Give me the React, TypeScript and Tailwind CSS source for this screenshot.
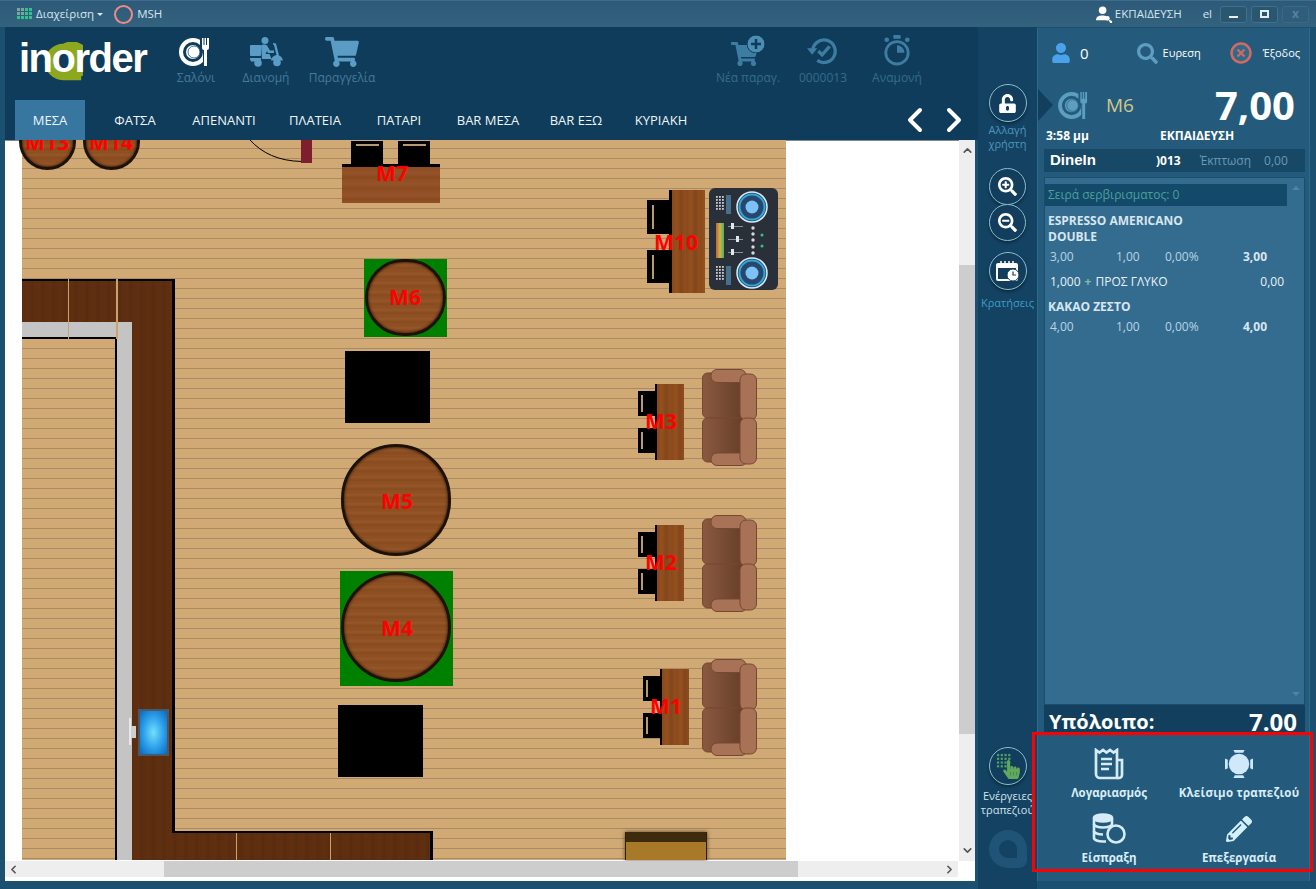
import { ChevronDown, ChevronLeft, ChevronRight, ChevronUp } from "lucide-react";
import type { ReactNode } from "react";
import {
    FaHandPointer,
    FaPencilAlt,
    FaSearch,
    FaSearchMinus,
    FaSearchPlus,
    FaShoppingCart,
    FaUnlockAlt,
    FaUser,
} from "react-icons/fa";

const woodRound =
    "bg-[repeating-linear-gradient(180deg,#8c4e1f_0px,#95562a_3px,#884b1e_6px,#905224_9px)]";
const woodVertical =
    "bg-[repeating-linear-gradient(90deg,#8a481c_0px,#94511f_5px,#84451b_9px,#90501f_14px)]";
const woodHorizontal =
    "bg-[repeating-linear-gradient(180deg,#8d4c20_0px,#95532a_6px,#894a20_11px)]";
const woodDark =
    "bg-[repeating-linear-gradient(90deg,#5c2d0f_0px,#5f2f10_6px,#582b0f_11px)]";

const PlateIcon = (props: { className: string; gap: string }) => (
    <svg viewBox="0 0 34 30" className={props.className} fill="none">
        <circle cx="14" cy="15" r="12" stroke="currentColor" strokeWidth="4" />
        <circle cx="14" cy="15" r="7" fill="currentColor" />
        <circle cx="15" cy="15" r="6" fill="none" stroke={props.gap} strokeWidth="1" opacity="0.7" />
        <path d="M21 1h12v10a3 3 0 0 1-3 3v16h-6V14a3 3 0 0 1-3-3z" fill={props.gap} />
        <path
            d="M23 1h1.500v7h1V1h1.500v7h1V1H30v10a2 2 0 0 1-2 2v16h-3V13a2 2 0 0 1-2-2z"
            fill="currentColor"
        />
    </svg>
);

const RiderIcon = () => (
    <svg viewBox="0 0 33 30" className="w-[33px] h-[30px] text-[#5b9cc4]" fill="currentColor">
        <rect x="0" y="8" width="11" height="11" rx="1" />
        <circle cx="15" cy="3.500" r="3.500" />
        <path d="M11 8.500c1-1.500 5-1.500 6 0l3 5h4v2.500h-6l-1-2-1.500 3h4l2 5H12z" />
        <path d="M23 6l3 .5 3 12c2 .8 3.500 2.500 4 5H21c0-2.500 3-5 5.500-5.500L24 8l-1-.5z" />
        <path d="M0 21h11v1.500c0 1-.5 1.500-1 2H1c-.6-1-1-2-1-3.500z" />
        <circle cx="8" cy="26" r="3.800" />
        <circle cx="27" cy="25.500" r="3.800" />
    </svg>
);

const HistoryIcon = () => (
    <svg viewBox="0 0 34 34" className="w-[32px] h-[32px] text-[#3d7da2]" fill="none">
        <path d="M6 17A12 12 0 1 1 11 27" stroke="currentColor" strokeWidth="3.500" />
        <path d="M0 14h11l-5.500 7z" fill="currentColor" />
        <path d="M12 17l4 4 8-9" stroke="currentColor" strokeWidth="3.500" />
    </svg>
);

const TimerIcon = () => (
    <svg viewBox="0 0 30 36" className="w-[28px] h-[34px] text-[#3d7da2]" fill="none">
        <circle cx="15" cy="21" r="12" stroke="currentColor" strokeWidth="3" />
        <path d="M15 21v-8a8 8 0 0 1 8 8z" fill="currentColor" />
        <rect x="11" y="2" width="8" height="4" rx="1" fill="currentColor" />
        <circle cx="4" cy="7" r="2.500" fill="currentColor" />
        <circle cx="26" cy="7" r="2.500" fill="currentColor" />
    </svg>
);

const CartPlusIcon = () => (
    <div className="relative w-[34px] h-[32px] text-[#3d7da2]">
        <FaShoppingCart className="absolute left-0 bottom-0 w-[27px] h-[26px]" />
        <svg viewBox="0 0 18 18" className="absolute right-0 top-0 w-[18px] h-[18px]">
            <circle cx="9" cy="9" r="9" fill="#4c8db3" stroke="#0f3c5a" strokeWidth="1" />
            <path d="M9 4v10M4 9h10" stroke="#0f3c5a" strokeWidth="2.500" />
        </svg>
    </div>
);

const CalendarIcon = () => (
    <svg viewBox="0 0 24 22" className="w-[24px] h-[22px]">
        <rect x="0" y="3" width="22" height="18" rx="2" fill="#fff" />
        <rect x="2" y="8" width="18" height="11" fill="#123d5c" />
        <path d="M5 1v4M9 1v4M13 1v4M17 1v4" stroke="#fff" strokeWidth="1.500" />
        <circle cx="17" cy="15" r="6" fill="#fff" stroke="#123d5c" strokeWidth="1" />
        <path d="M17 11.500V15h3" stroke="#123d5c" strokeWidth="1.200" fill="none" />
    </svg>
);

const TouchIcon = () => (
    <div className="relative w-[24px] h-[26px]">
        <svg viewBox="0 0 16 16" className="absolute left-0 top-0 w-[15px] h-[15px]">
            {[1, 5, 9, 13].map((y) =>
                [1, 5, 9, 13].map((x) => (
                    <rect key={`${x}-${y}`} x={x} y={y} width="2.400" height="2.400" fill="#4f9d63" />
                )),
            )}
        </svg>
        <FaHandPointer className="absolute right-0 bottom-0 w-[17px] h-[19px] text-[#5fa85c]" />
    </div>
);

const ReceiptIcon = () => (
    <svg viewBox="0 0 32 32" className="w-[32px] h-[32px]" fill="none" stroke="#d3ecf7" strokeWidth="2.700">
        <path d="M3 2l3.500 2.500L10 2l3.500 2.500L17 2l3.500 2.500L24 2v28H7a4 4 0 0 1-4-4z" />
        <path d="M8 11h11M8 16h11M8 21h8" />
        <path d="M24 12h5v15a3 3 0 0 1-3 3h-2" />
    </svg>
);

const TableIcon = () => (
    <svg viewBox="0 0 30 30" className="w-[28px] h-[28px]" fill="#cfe8fa">
        <circle cx="15" cy="15" r="11" />
        <path d="M9 0h12l-1.500 3h-9z" />
        <path d="M9 30h12l-1.500-3h-9z" />
        <path d="M0 9v12l3-1.500v-9z" />
        <path d="M30 9v12l-3-1.500v-9z" />
    </svg>
);

const CoinsIcon = () => (
    <svg viewBox="0 0 34 32" className="w-[34px] h-[32px]" fill="none" stroke="#d3ecf7" strokeWidth="2.600">
        <ellipse cx="11" cy="5" rx="9" ry="3.500" fill="#d3ecf7" />
        <path d="M2 5v6c0 2 4 3.500 9 3.500s9-1.500 9-3.500V5" />
        <path d="M2 11v7c0 2 4 3.500 9 3.500" />
        <path d="M2 18v7c0 2 4 3.500 9 3.500h3" />
        <circle cx="24" cy="21" r="8.500" />
    </svg>
);

const MainNavItem = (props: { width: string; icon: ReactNode; label: string; labelColor: string }) => (
    <div className={`flex flex-col items-center gap-[3px] ${props.width}`}>
        <div className="h-[32px] flex items-end justify-center">{props.icon}</div>
        <span className={`text-[12px] leading-[16px] whitespace-nowrap ${props.labelColor}`}>
            {props.label}
        </span>
    </div>
);

const TitleBar = () => (
    <div className="h-[27px] shrink-0 flex items-center pl-[17px] pr-[7px] text-[11.5px] text-[#d7e6ef] bg-[linear-gradient(180deg,#2c5a78,#33627f)] border-t border-[#3d6f8d]">
        <svg viewBox="0 0 15 12" className="w-[15px] h-[12px]">
            {[0, 4, 8].map((y) =>
                [0, 4, 8, 12].map((x) => (
                    <rect
                        key={`${x}-${y}`}
                        x={x}
                        y={y}
                        width="3"
                        height="3"
                        fill={x > 4 || y > 4 ? "#35c08e" : "#7aa79c"}
                    />
                )),
            )}
        </svg>
        <span className="ml-[4px]">Διαχείριση</span>
        <span className="ml-[3px] w-0 h-0 border-x-[3px] border-t-[3px] border-transparent border-t-[#d7e6ef]" />
        <span className="ml-[11px] w-[19px] h-[19px] rounded-full border-2 border-[#f08a8a]" />
        <span className="ml-[4px]">MSH</span>
        <svg viewBox="0 0 18 18" className="ml-auto w-[17px] h-[17px]" fill="#fff">
            <circle cx="7" cy="4.500" r="4" />
            <path d="M0 15c0-4 3-5 7-5 1.500 0 3 .2 4 .8V15z" />
            <circle cx="12" cy="13" r="2.500" />
            <path d="M13 14l4 2v2h-2z" />
        </svg>
        <span className="ml-[2px]">ΕΚΠΑΙΔΕΥΣΗ</span>
        <span className="ml-[21px]">el</span>
        <div className="ml-[8px] flex gap-[4px]">
            <div className="w-[27px] h-[17px] rounded-[3px] bg-[#2a566f] border border-[#3d7190] flex items-center justify-center">
                <span className="w-[9px] h-[2px] mt-[5px] bg-[#e4eef4]" />
            </div>
            <div className="w-[27px] h-[17px] rounded-[3px] bg-[#2a566f] border border-[#3d7190] flex items-center justify-center">
                <span className="w-[9px] h-[8px] border-2 border-[#e4eef4]" />
            </div>
            <div className="w-[27px] h-[17px] rounded-[3px] bg-[#2f5e7c] border border-[#376a88] flex items-center justify-center text-[12px] font-bold text-[#5a8199] leading-none">
                x
            </div>
        </div>
    </div>
);

const tabs = [
    { label: "ΜΕΣΑ", width: "w-[70px]", active: true },
    { label: "ΦΑΤΣΑ", width: "w-[100px]", active: false },
    { label: "ΑΠΕΝΑΝΤΙ", width: "w-[78px]", active: false },
    { label: "ΠΛΑΤΕΙΑ", width: "w-[104px]", active: false },
    { label: "ΠΑΤΑΡΙ", width: "w-[64px]", active: false },
    { label: "BAR ΜΕΣΑ", width: "w-[114px]", active: false },
    { label: "BAR ΕΞΩ", width: "w-[62px]", active: false },
    { label: "ΚΥΡΙΑΚΗ", width: "w-[108px]", active: false },
];

const Header = () => (
    <div className="h-[113px] shrink-0 bg-[#0f3c5a] flex flex-col">
        <div className="h-[73px] flex pt-[8px]">
            <div className="w-[156px] pl-[14px] pt-[6px]">
                <div className="relative w-[130px] h-[48px]">
                    <svg viewBox="0 0 44 42" className="absolute left-[24px] top-[1px] w-[40px] h-[40px]">
                        <path
                            d="M22 1a20 20 0 1 0 0 40h20v-4a20 20 0 0 0-20-36zM22 10a11 11 0 1 1 0 22 11 11 0 0 1 0-22z"
                            fill="#8da81f"
                            fillRule="evenodd"
                        />
                    </svg>
                    <span className="absolute left-0 top-[-11px] text-[40px] leading-[56px] font-bold text-white tracking-[-1.5px] font-['Liberation_Sans',sans-serif]">
                        inorder
                    </span>
                </div>
            </div>
            <MainNavItem
                width="w-[70px]"
                icon={<PlateIcon className="w-[34px] h-[30px] text-white" gap="#0f3c5a" />}
                label="Σαλόνι"
                labelColor="text-[#45799b]"
            />
            <MainNavItem width="w-[70px]" icon={<RiderIcon />} label="Διανομή" labelColor="text-[#45799b]" />
            <MainNavItem
                width="w-[82px]"
                icon={<FaShoppingCart className="w-[34px] h-[30px] text-[#5b9cc4]" />}
                label="Παραγγελία"
                labelColor="text-[#45799b]"
            />
            <div className="ml-auto mr-[45px] flex">
                <MainNavItem width="w-[74px]" icon={<CartPlusIcon />} label="Νέα παραγ." labelColor="text-[#356c8e]" />
                <MainNavItem width="w-[76px]" icon={<HistoryIcon />} label="0000013" labelColor="text-[#356c8e]" />
                <MainNavItem width="w-[72px]" icon={<TimerIcon />} label="Αναμονή" labelColor="text-[#356c8e]" />
            </div>
        </div>
        <div className="h-[40px] flex pl-[10px] items-stretch">
            {tabs.map((tab) => (
                <div
                    key={tab.label}
                    className={`${tab.width} flex items-center justify-center pt-[2px] text-[13px] text-[#eef5f9] whitespace-nowrap ${
                        tab.active ? "bg-[#37769f]" : ""
                    }`}
                >
                    {tab.label}
                </div>
            ))}
            <div className="ml-auto mr-[16px] flex items-center gap-[23px]">
                <svg viewBox="0 0 16 26" className="w-[16px] h-[26px]" fill="none">
                    <path d="M13 3L3 13l10 10" stroke="#fff" strokeWidth="4" strokeLinecap="round" strokeLinejoin="round" />
                </svg>
                <svg viewBox="0 0 16 26" className="w-[16px] h-[26px]" fill="none">
                    <path d="M3 3l10 10L3 23" stroke="#fff" strokeWidth="4" strokeLinecap="round" strokeLinejoin="round" />
                </svg>
            </div>
        </div>
    </div>
);

const TableLabel = (props: { className: string; text: string }) => (
    <span
        className={`absolute -translate-x-1/2 -translate-y-1/2 text-[21px] leading-none font-bold text-[#ff0000] ${props.className}`}
    >
        {props.text}
    </span>
);

const RoundTable = (props: { className: string }) => (
    <div
        className={`absolute rounded-full ${woodRound} border-[3px] border-[#1d1108] shadow-[inset_0_0_3px_#1d1108] ${props.className}`}
    />
);

const Sofa = (props: { className: string }) => (
    <svg viewBox="0 0 55 97" className={`absolute w-[55px] h-[97px] ${props.className}`}>
        <defs>
            <linearGradient id="seat" x1="0" x2="1" y1="0" y2="0">
                <stop offset="0" stopColor="#8a5a40" />
                <stop offset="1" stopColor="#643c26" />
            </linearGradient>
        </defs>
        <g stroke="#76492f" strokeWidth="1">
            <rect x="0.500" y="4" width="44" height="45" rx="5" fill="url(#seat)" />
            <rect x="0.500" y="49" width="44" height="44" rx="5" fill="url(#seat)" />
            <rect x="9" y="0.500" width="35" height="13" rx="6" fill="#a87257" />
            <rect x="9" y="84" width="36" height="12.500" rx="6" fill="#a87257" />
            <rect x="38" y="5" width="16.500" height="46" rx="6" fill="#a87257" />
            <rect x="38" y="49" width="16.500" height="46" rx="6" fill="#a87257" />
        </g>
    </svg>
);

const DjDeck = () => (
    <svg viewBox="0 0 69 102" className="absolute left-[704px] top-[48px] w-[69px] h-[102px]">
        <defs>
            <linearGradient id="meter" x1="0" x2="1" y1="0" y2="0">
                <stop offset="0" stopColor="#b5654a" />
                <stop offset="0.5" stopColor="#d8b23c" />
                <stop offset="1" stopColor="#3fb56a" />
            </linearGradient>
        </defs>
        <rect width="69" height="102" rx="6" fill="#2a303a" />
        {[19, 85].map((cy) => (
            <g key={cy}>
                <circle cx="43" cy={cy} r="15" fill="#26486a" stroke="#d8eef8" strokeWidth="1.500" />
                <circle cx="43" cy={cy} r="12.500" fill="none" stroke="#36a3dc" strokeWidth="2" />
                <circle cx="43" cy={cy} r="6.500" fill="#7dc1f6" />
            </g>
        ))}
        {[8, 78].map((top) =>
            [0, 3, 6, 9, 12].map((dy) =>
                [7, 10, 13].map((x) => (
                    <rect key={`${top}-${dy}-${x}`} x={x} y={top + dy} width="1.800" height="1.800" fill="#c9ced4" />
                )),
            ),
        )}
        <rect x="17" y="7" width="5" height="19" fill="#47708f" />
        <rect x="17" y="78" width="5" height="19" fill="#47708f" />
        <rect x="7" y="35" width="8" height="35" fill="url(#meter)" />
        {[38, 51, 64].map((y) => (
            <g key={y}>
                <rect x="19" y={y} width="15" height="1" fill="#8a8f96" />
                <rect x={y === 51 ? 27 : 22} y={y - 3} width="3" height="6" fill="#e6e6e6" />
            </g>
        ))}
        {[40, 46, 52, 59, 65].map((y) => (
            <circle key={y} cx="44" cy={y} r="1.700" fill="#d7d7d7" />
        ))}
        <circle cx="53" cy="47" r="1.500" fill="#2ecc71" />
        <circle cx="53" cy="58" r="1.500" fill="#2ecc71" />
    </svg>
);

const ChairBlock = (props: { className: string; stripClassName: string }) => (
    <div className={`absolute bg-black ${props.className}`}>
        <div className={`absolute bg-[#b99a70] ${props.stripClassName}`} />
    </div>
);

// chairs and table of the small side desks (M1, M2, M3)
const SideDesk = (props: { className: string; label: string }) => (
    <div className={`absolute w-[46px] h-[76px] ${props.className}`}>
        <ChairBlock className="left-0 top-[7px] w-[18px] h-[25px]" stripClassName="left-[3px] top-[4px] w-[2px] h-[17px]" />
        <ChairBlock className="left-0 top-[44px] w-[18px] h-[25px]" stripClassName="left-[3px] top-[4px] w-[2px] h-[17px]" />
        <div className="absolute left-[17px] top-0 w-[2px] h-[76px] bg-black" />
        <div className={`absolute left-[19px] top-0 w-[27px] h-[76px] ${woodVertical}`} />
        <TableLabel className="left-[23px] top-[37px]" text={props.label} />
    </div>
);

const FloorPlan = () => (
    <div className="relative flex-1 overflow-hidden">
        <div className="absolute left-[17px] top-0 w-[764px] h-[720px] bg-[repeating-linear-gradient(180deg,#d0a975_0px,#d0a975_8px,#a88b64_8px,#a88b64_9.500px,#d0a975_9.500px,#d0a975_10px)]" />

        {/* bar counter */}
        <div className={`absolute left-[17px] top-[139px] w-[153px] h-[45px] ${woodDark} border-t-2 border-black`} />
        <div className={`absolute left-[127px] top-[139px] w-[43px] h-[553px] ${woodDark} border-t-2 border-r-[3px] border-black`} />
        <div className="absolute left-[17px] top-[182px] w-[110px] h-[15px] bg-[#c4c4c4]" />
        <div className="absolute left-[112px] top-[182px] w-[15px] h-[538px] bg-[#c4c4c4]" />
        <div className="absolute left-[17px] top-[197px] w-[95px] h-[2px] bg-black" />
        <div className="absolute left-[110px] top-[197px] w-[2px] h-[523px] bg-black" />
        <div className="absolute left-[63px] top-[139px] w-px h-[60px] bg-[#c9a26f]" />
        <div className="absolute left-[111px] top-[139px] w-[2px] h-[60px] bg-[#c9a26f]" />
        <div className={`absolute left-[127px] top-[692px] w-[301px] h-[28px] ${woodDark} border-r-[3px] border-black`} />
        <div className="absolute left-[167px] top-[691px] w-[261px] h-[2px] bg-black" />
        <div className="absolute left-[231px] top-[693px] w-px h-[27px] bg-[#c9a26f]" />
        <div className="absolute left-[325px] top-[693px] w-px h-[27px] bg-[#c9a26f]" />
        <div className="absolute left-[124px] top-[578px] w-[2px] h-[27px] bg-[#e8e8e8]" />
        <div className="absolute left-[126px] top-[586px] w-[5px] h-[12px] bg-[#d0d0d0]" />
        <div className="absolute left-[133px] top-[569px] w-[31px] h-[47px] border-2 border-[#465a6c] bg-[radial-gradient(ellipse_at_center,#72dffb_0%,#2a9de9_55%,#0b68bb_100%)]" />

        {/* door */}
        <svg viewBox="0 0 54 24" className="absolute left-[245px] top-0 w-[54px] h-[24px]" fill="none">
            <path d="M0 0C12 13 28 21 52 21.500" stroke="#000" strokeWidth="1" />
        </svg>
        <div className="absolute left-[296px] top-0 w-[11px] h-[23px] bg-[#7e1f2f]" />

        {/* round tables cut off by the tabs */}
        <RoundTable className="left-[14px] top-[-27px] w-[57px] h-[57px]" />
        <RoundTable className="left-[78px] top-[-27px] w-[57px] h-[57px]" />
        <TableLabel className="left-[42px] top-[2px]" text="M13" />
        <TableLabel className="left-[106px] top-[2px]" text="M14" />

        {/* M7 */}
        <ChairBlock className="left-[346px] top-[1px] w-[32px] h-[24px]" stripClassName="left-[5px] top-[3px] w-[23px] h-[2px]" />
        <ChairBlock className="left-[393px] top-[1px] w-[32px] h-[24px]" stripClassName="left-[5px] top-[3px] w-[23px] h-[2px]" />
        <div className="absolute left-[337px] top-[24px] w-[98px] h-[3px] bg-black" />
        <div className={`absolute left-[337px] top-[27px] w-[98px] h-[36px] ${woodHorizontal}`} />
        <TableLabel className="left-[387px] top-[33px]" text="M7" />

        {/* M6 */}
        <div className="absolute left-[359px] top-[119px] w-[83px] h-[78px] bg-[#008000]" />
        <RoundTable className="left-[360px] top-[119px] w-[81px] h-[77px]" />
        <TableLabel className="left-[400px] top-[157px]" text="M6" />

        <div className="absolute left-[340px] top-[211px] w-[85px] h-[72px] bg-black" />

        {/* M5 */}
        <RoundTable className="left-[336px] top-[304px] w-[110px] h-[112px]" />
        <TableLabel className="left-[392px] top-[361px]" text="M5" />

        {/* M4 */}
        <div className="absolute left-[335px] top-[431px] w-[113px] h-[115px] bg-[#008000]" />
        <RoundTable className="left-[336px] top-[432px] w-[110px] h-[110px]" />
        <TableLabel className="left-[392px] top-[488px]" text="M4" />

        <div className="absolute left-[333px] top-[565px] w-[85px] h-[72px] bg-black" />

        {/* M10 */}
        <ChairBlock className="left-[642px] top-[60px] w-[25px] h-[34px]" stripClassName="left-[5px] top-[5px] w-[2px] h-[24px]" />
        <ChairBlock className="left-[642px] top-[110px] w-[25px] h-[33px]" stripClassName="left-[5px] top-[5px] w-[2px] h-[24px]" />
        <div className="absolute left-[664px] top-[50px] w-[3px] h-[103px] bg-black" />
        <div className={`absolute left-[667px] top-[50px] w-[33px] h-[103px] ${woodVertical}`} />
        <TableLabel className="left-[671px] top-[102px]" text="M10" />
        <DjDeck />

        <SideDesk className="left-[633px] top-[244px]" label="M3" />
        <SideDesk className="left-[633px] top-[385px]" label="M2" />
        <SideDesk className="left-[638px] top-[529px]" label="M1" />
        <Sofa className="left-[697px] top-[229px]" />
        <Sofa className="left-[697px] top-[375px]" />
        <Sofa className="left-[697px] top-[519px]" />

        {/* bench at the bottom */}
        <div className="absolute left-[620px] top-[692px] w-[82px] h-[28px] border-x border-[#2e1f08] bg-[linear-gradient(180deg,#3e2a0c_0px,#3e2a0c_10px,#a87929_10px,#a87929_100%)] shadow-[0_0_4px_#5a4020]" />
    </div>
);

const FloorArea = () => (
    <div className="h-[741px] w-[970px] bg-white flex flex-col shadow-[inset_0_1px_0_#7f8a94]">
        <div className="h-[721px] flex">
            <FloorPlan />
            <div className="w-[16px] bg-[#eeeeee] flex flex-col items-center relative">
                <ChevronUp className="absolute top-[4px] w-[13px] h-[13px] text-[#555]" strokeWidth={3} />
                <div className="mt-[125px] w-full h-[469px] bg-[#cdcdcd]" />
                <ChevronDown className="absolute bottom-[4px] w-[13px] h-[13px] text-[#555]" strokeWidth={3} />
            </div>
        </div>
        <div className="h-[16px] w-[953px] bg-[#eeeeee] flex items-center relative">
            <ChevronLeft className="absolute left-[2px] w-[13px] h-[13px] text-[#555]" strokeWidth={3} />
            <div className="ml-[159px] w-[634px] h-full bg-[#cdcdcd]" />
            <ChevronRight className="absolute right-[2px] w-[13px] h-[13px] text-[#555]" strokeWidth={3} />
        </div>
    </div>
);

const SideButton = (props: { children: ReactNode; className: string }) => (
    <div
        className={`rounded-full border border-[#8cc0cc] bg-[#123d5c] flex items-center justify-center shadow-[0_2px_3px_rgba(0,0,0,0.35)] ${props.className}`}
    >
        {props.children}
    </div>
);

const SideColumn = () => (
    <div className="w-[59px] shrink-0 bg-[#134263] flex flex-col items-center pt-[57px] pb-[21px] text-[11px] leading-[14px]">
        <SideButton className="w-[38px] h-[38px]">
            <FaUnlockAlt className="w-[17px] h-[19px] text-white" />
        </SideButton>
        <div className="mt-[1px] text-center text-[#4f95bd]">
            Αλλαγή
            <br />
            χρήστη
        </div>
        <SideButton className="mt-[17px] w-[37px] h-[37px]">
            <FaSearchPlus className="w-[19px] h-[19px] text-white" />
        </SideButton>
        <SideButton className="-mt-[1px] w-[37px] h-[37px]">
            <FaSearchMinus className="w-[19px] h-[19px] text-white" />
        </SideButton>
        <SideButton className="mt-[11px] w-[38px] h-[38px]">
            <CalendarIcon />
        </SideButton>
        <div className="mt-[6px] text-[#3f9cc5]">Κρατήσεις</div>
        <div className="mt-auto flex flex-col items-center">
            <SideButton className="w-[38px] h-[38px]">
                <TouchIcon />
            </SideButton>
            <div className="mt-[4px] text-center text-[#d2e3ec] whitespace-nowrap">
                Ενέργειες
                <br />
                τραπεζιού
            </div>
            <div className="mt-[13px] w-[38px] h-[38px] rounded-[50%_50%_8px_50%] border-[10px] border-[#1f5477]" />
        </div>
    </div>
);

const PriceRow = (props: { price: string; qty: string; discount: string; total: string }) => (
    <div className="flex pl-[5px] mt-[4px] text-[12px] leading-[16px] text-[#b9d4e3]">
        <span className="w-[66px]">{props.price}</span>
        <span className="w-[49px]">{props.qty}</span>
        <span className="w-[78px]">{props.discount}</span>
        <span className="font-bold text-[#d8e6ee]">{props.total}</span>
    </div>
);

const ActionItem = (props: { icon: ReactNode; label: string; labelClassName?: string }) => (
    <div className="flex flex-col items-center">
        <div className="h-[32px] flex items-center justify-center">{props.icon}</div>
        <span
            className={`mt-[5px] text-[11.5px] leading-[16px] font-bold text-[#d9eef7] whitespace-nowrap ${props.labelClassName ?? ""}`}
        >
            {props.label}
        </span>
    </div>
);

const OrderPanel = () => (
    <div className="w-[273px] shrink-0 mt-[1px] h-[853px] bg-[#245a7c] border-x border-[#2e6a8d] flex flex-col text-white">
        <div className="h-[54px] shrink-0 flex items-center pb-[4px] pl-[14px] text-[11px]">
            <FaUser className="w-[18px] h-[20px] text-[#4aa3ea]" />
            <span className="ml-[10px] text-[15px]">0</span>
            <FaSearch className="ml-[48px] w-[21px] h-[21px] text-[#5d9dbf]" />
            <span className="ml-[5px]">Ευρεση</span>
            <svg viewBox="0 0 22 22" className="ml-[29px] w-[22px] h-[22px]" fill="none">
                <circle cx="11" cy="11" r="9.500" stroke="#d6695f" strokeWidth="2.500" fill="#2e6a8a" />
                <path d="M7.500 7.500l7 7M14.500 7.500l-7 7" stroke="#d6695f" strokeWidth="2.200" />
            </svg>
            <span className="ml-[11px]">Έξοδος</span>
        </div>
        <div className="h-[46px] shrink-0 flex items-center pr-[14px]">
            <span className="w-0 h-0 border-y-[16px] border-l-[15px] border-transparent border-l-[#123f5e]" />
            <PlateIcon className="ml-[5px] w-[33px] h-[29px] text-[#5d9dbf]" gap="#245a7c" />
            <span className="ml-[15px] text-[19px] text-[#cfc88f]">M6</span>
            <span className="ml-auto text-[40px] leading-none font-bold">7,00</span>
        </div>
        <div className="h-[21px] shrink-0 flex items-start pl-[8px] text-[12px] font-bold leading-[16px]">
            <span className="w-[114px]">3:58 μμ</span>
            <span>ΕΚΠΑΙΔΕΥΣΗ</span>
        </div>
        <div className="h-[23px] shrink-0 ml-[6px] mr-[4px] bg-[#174866] flex items-center pl-[6px]">
            <span className="w-[106px] text-[15px] font-bold font-['Liberation_Sans',sans-serif]">DineIn</span>
            <span className="text-[12px] font-bold">)013</span>
            <span className="ml-[19px] text-[12px] text-[#6a9ab5]">Έκπτωση</span>
            <span className="ml-[13px] text-[12px] text-[#6a9ab5]">0,00</span>
        </div>
        <div className="flex-1 min-h-0 mt-[5px] ml-[6px] mr-[4px] bg-[#346c90] border border-[#1a4d6e] flex">
            <div className="w-[242px] pt-[6px]">
                <div className="h-[22px] bg-[#134a6a] flex items-center pl-[3px] text-[12px] text-[#4e9e9e]">
                    Σειρά σερβιρισματος: 0
                </div>
                <div className="mt-[7px] pl-[3px] w-[170px] text-[12px] leading-[16px] font-bold text-[#d8e6ee]">
                    ESPRESSO AMERICANO DOUBLE
                </div>
                <PriceRow price="3,00" qty="1,00" discount="0,00%" total="3,00" />
                <div className="mt-[9px] pl-[5px] flex items-center text-[12px] leading-[16px] text-[#e8f1f6]">
                    <span>1,000</span>
                    <span className="mx-[4px] text-[#7fbfa8] font-bold">+</span>
                    <span>ΠΡΟΣ ΓΛΥΚΟ</span>
                    <span className="ml-auto mr-[3px]">0,00</span>
                </div>
                <div className="mt-[9px] pl-[3px] text-[12px] leading-[16px] font-bold text-[#d8e6ee]">
                    ΚΑΚΑΟ ΖΕΣΤΟ
                </div>
                <PriceRow price="4,00" qty="1,00" discount="0,00%" total="4,00" />
            </div>
            <div className="flex-1 flex flex-col items-center justify-between py-[8px]">
                <span className="w-0 h-0 border-x-[4px] border-b-[4px] border-transparent border-b-[#4d84a8]" />
                <span className="w-0 h-0 border-x-[4px] border-t-[4px] border-transparent border-t-[#4d84a8]" />
            </div>
        </div>
        <div className="h-[28px] shrink-0 ml-[6px] mr-[4px] bg-[#123f5e] overflow-hidden flex items-start justify-between px-[5px] font-bold">
            <span className="text-[20px] leading-[34px]">Υπόλοιπο:</span>
            <span className="text-[24px] leading-[34px] mr-[3px]">7.00</span>
        </div>
        <div className="h-[148px] shrink-0 pl-[8px] pr-[5px] pt-[15px] grid grid-cols-[126px_134px] auto-rows-min gap-y-[12px]">
            <ActionItem icon={<ReceiptIcon />} label="Λογαριασμός" />
            <ActionItem icon={<TableIcon />} label="Κλείσιμο τραπεζιού" labelClassName="tracking-[0.25px]" />
            <ActionItem icon={<CoinsIcon />} label="Είσπραξη" />
            <ActionItem icon={<FaPencilAlt className="w-[26px] h-[26px] text-[#d3f0f8]" />} label="Επεξεργασία" />
        </div>
    </div>
);

export default function App() {
    return (
        <div className="relative w-[1316px] h-[889px] overflow-hidden flex flex-col bg-[#1b5071] font-['Open_Sans','Noto_Sans',sans-serif]">
            <TitleBar />
            <div className="flex flex-1 min-h-0 pl-[5px]">
                <div className="w-[973px] shrink-0 flex flex-col">
                    <Header />
                    <FloorArea />
                </div>
                <SideColumn />
                <OrderPanel />
            </div>
            <div className="absolute left-[1032px] top-[732px] w-[281px] h-[140px] border-[3px] border-[#ff0000] pointer-events-none" />
        </div>
    );
}
